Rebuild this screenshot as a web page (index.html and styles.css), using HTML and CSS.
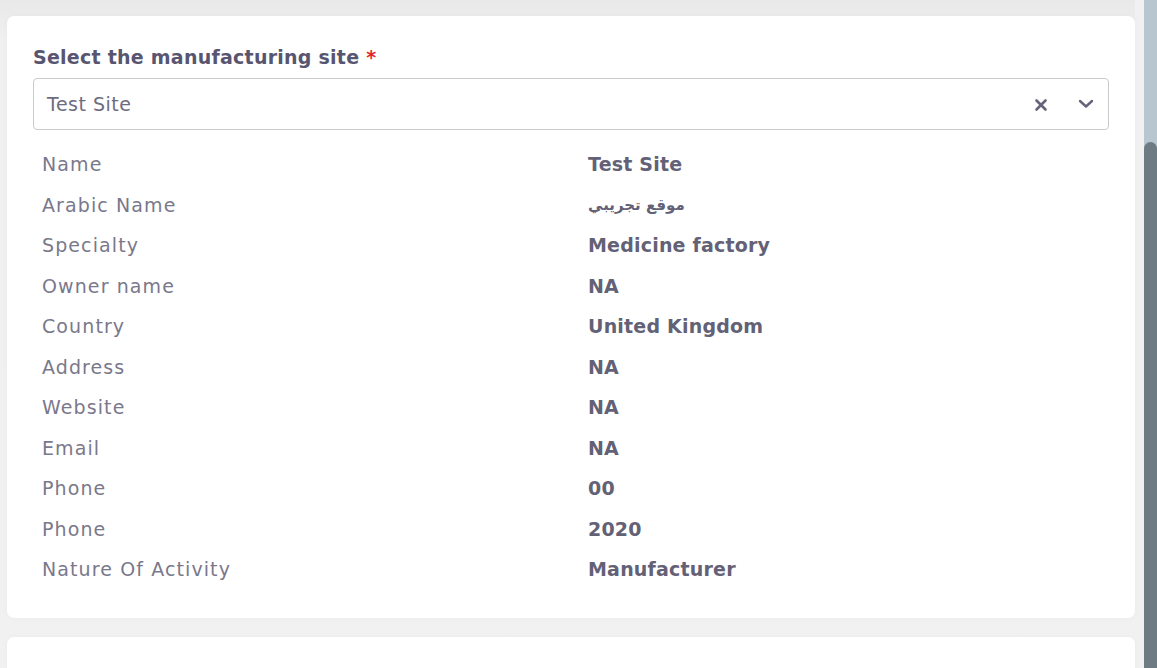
FILE: index.html
```html
<!DOCTYPE html>
<html>
<head>
<meta charset="utf-8">
<link rel="stylesheet" href="styles.css">
</head>
<body>
<div class="page">
  <main class="content">
    <section class="card">
      <label class="field-label">Select the manufacturing site <span class="req">*</span></label>
      <div class="select">
        <span class="select-value">Test Site</span>
        <span class="select-icons">
          <svg class="icon-x" width="14" height="14" viewBox="0 0 14 14"><path d="M2.5 2.5 L11.5 11.5 M11.5 2.5 L2.5 11.5" stroke="#65637a" stroke-width="2.6" stroke-linecap="round"/></svg>
          <svg class="icon-chev" width="16" height="10" viewBox="0 0 16 10"><path d="M2 2 L8 7.5 L14 2" fill="none" stroke="#65637a" stroke-width="2.4" stroke-linecap="round" stroke-linejoin="round"/></svg>
        </span>
      </div>
      <dl class="details">
        <dt>Name</dt><dd>Test Site</dd>
        <dt>Arabic Name</dt><dd class="ar" lang="ar">موقع تجريبي</dd>
        <dt>Specialty</dt><dd>Medicine factory</dd>
        <dt>Owner name</dt><dd>NA</dd>
        <dt>Country</dt><dd>United Kingdom</dd>
        <dt>Address</dt><dd>NA</dd>
        <dt>Website</dt><dd>NA</dd>
        <dt>Email</dt><dd>NA</dd>
        <dt>Phone</dt><dd>00</dd>
        <dt>Phone</dt><dd>2020</dd>
        <dt>Nature Of Activity</dt><dd>Manufacturer</dd>
      </dl>
    </section>
    <section class="card card-next"></section>
  </main>
  <div class="scrollbar"><div class="thumb"></div></div>
</div>
</body>
</html>
```
FILE: styles.css
```css
* { box-sizing: border-box; }
html, body { margin: 0; height: 100%; overflow: hidden; }
body {
  font-family: "DejaVu Sans", "Open Sans", sans-serif;
  background: #f1f1f1;
}
.page {
  display: flex;
  height: 668px;
}
.content {
  flex: 1;
  padding: 16px 0 0 7px;
  background: linear-gradient(#e9e9e9 0, #f0f0f0 40px, #f1f1f1 100%);
  display: flex;
  flex-direction: column;
  gap: 19px;
}
.card {
  background: #fff;
  border-radius: 7px;
  box-shadow: 0 0 6px rgba(0,0,0,0.03);
  padding: 26px 26px 28px 26px;
}
.card-next { flex: 1; padding: 0; border-radius: 7px 7px 0 0; }
.field-label {
  display: block;
  font-size: 19px;
  font-weight: 700;
  color: #57556f;
  letter-spacing: 0.25px;
  line-height: 30px;
  margin-bottom: 6px;
}
.req { color: #e4262c; }
.select {
  height: 52px;
  border: 1px solid #cbcbcb;
  border-radius: 4px;
  display: flex;
  align-items: center;
  padding: 0 14px 0 13px;
}
.select-value {
  flex: 1;
  font-size: 19px;
  color: #6e6c80;
  letter-spacing: 0.5px;
}
.select-icons {
  display: flex;
  align-items: center;
  gap: 30px;
}
.icon-x { margin-top: 1px; }
.details {
  margin: 14px 0 0 0;
  padding-left: 9px;
  display: grid;
  grid-template-columns: 546px 1fr;
  grid-auto-rows: 40.5px;
  align-items: center;
  font-size: 19px;
}
.details dt {
  color: #7a788b;
  font-weight: 400;
  letter-spacing: 1.1px;
}
.details dd {
  margin: 0;
  color: #636176;
  font-weight: 700;
  letter-spacing: 0.2px;
}
.details dd.ar {
  font-size: 15px;
  font-weight: 700;
  letter-spacing: 0;
}
.scrollbar {
  width: 13px;
  margin-left: 9px;
  background: #b8c6cf;
  display: flex;
  flex-direction: column;
  justify-content: flex-end;
}
.scrollbar .thumb {
  height: 526px;
  background: #6f7b82;
  border-radius: 8px 8px 0 0;
}
```
